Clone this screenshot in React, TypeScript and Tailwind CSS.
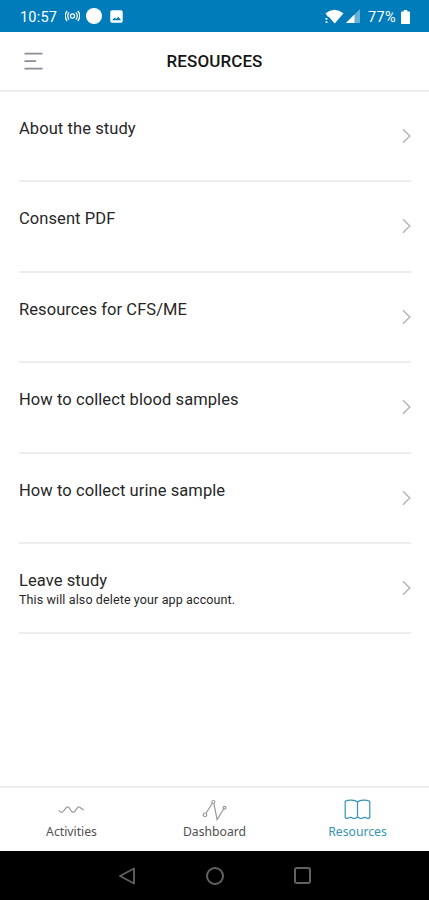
import React from 'react';

const resources = [
  { title: 'About the study' },
  { title: 'Consent PDF' },
  { title: 'Resources for CFS/ME' },
  { title: 'How to collect blood samples' },
  { title: 'How to collect urine sample' },
  { title: 'Leave study', note: 'This will also delete your app account.' },
];

const StatusBar: React.FC = () => (
  <div className="h-8 shrink-0 bg-[#007cba] text-white flex items-center justify-between pl-[20px] pr-[18px]">
    <div className="flex items-center">
      <span className="w-[37px] pt-[4px] text-[14.5px] leading-none tracking-[0.2px]">10:57</span>
      <svg className="ml-[8px]" width="15" height="12" viewBox="0 0 15 12" fill="none" stroke="currentColor" strokeWidth="1.2">
        <circle cx="7.5" cy="6" r="2.1" />
        <path d="M4.2 2.4a5 5 0 0 0 0 7.2M2.2 1a7.5 7.5 0 0 0 0 10M10.8 2.4a5 5 0 0 1 0 7.2M12.8 1a7.5 7.5 0 0 1 0 10" />
      </svg>
      <span className="ml-[6px] w-4 h-4 rounded-full bg-white" />
      <svg className="ml-[8px]" width="13" height="13" viewBox="0 0 13 13">
        <rect x="0.3" y="0.3" width="12.4" height="12.4" rx="1.6" fill="#fff" />
        <path d="M2.2 10.2l2.3-2.6 1.7 1.5 2.2-2.3 2.6 3.4z" fill="#007cba" />
      </svg>
    </div>
    <div className="flex items-center">
      <svg width="19" height="15" viewBox="0 0 19 15" fill="#fff">
        <path d="M0.5 4.3Q9.5-2.8 18.5 4.3L10.2 14Q9.7 14.5 9.2 14L4.5 8.5Q3.5 7.6 2.6 7.6z" />
        <path d="M0.6 9h1.8v1.8H.6zM.6 12.2h1.8V14H.6z" />
      </svg>
      <svg className="ml-[2px]" width="14" height="14" viewBox="0 0 14 14" fill="#fff">
        <path d="M14 0v14H0z" opacity="0.4" />
        <path d="M8.5 5.5V14H0z" />
      </svg>
      <span className="ml-[8px] w-[29px] pt-[4px] text-[14.5px] leading-none tracking-[0.4px]">77%</span>
      <svg className="ml-[4px] mr-px mt-px" width="9" height="14" viewBox="0 0 9 14" fill="#fff">
        <path d="M2.7 0h3.6v1.5h1.9q.8 0 .8.8v10.9q0 .8-.8.8H.8q-.8 0-.8-.8V2.3q0-.8.8-.8h1.9z" />
      </svg>
    </div>
  </div>
);

const Header: React.FC = () => (
  <header className="h-[60px] shrink-0 border-b-2 border-[#eceeee] grid grid-cols-[1fr_auto_1fr] items-center px-[24px]">
    <button className="w-5">
      <svg width="19" height="19" viewBox="0 0 19 19" stroke="#8c8d99" strokeWidth="1.8">
        <path d="M.5 1.7h18M.5 9.2h11.5M.5 16.7h18" />
      </svg>
    </button>
    <h1 className="pt-[2px] text-[17px] font-medium tracking-[0.1px] text-[#161616]">RESOURCES</h1>
  </header>
);

const tabs = [
  {
    name: 'Activities',
    active: false,
    icon: <path d="M.8 11.3q2.7 4.2 5.4 0l1.4-2q2-2.7 4 0l1.6 2.6q2 2.6 4 0l1.8-2.6q2-2.7 4 0l2.8 1.6" />,
  },
  {
    name: 'Dashboard',
    active: false,
    icon: (
      <>
        <circle cx="4" cy="15.8" r="1.8" />
        <circle cx="12.3" cy="3" r="1.5" />
        <path d="M5 14.2L11.3 4.3M12.9 4.6l3.2 16L22.6 10" />
        <circle cx="23.5" cy="8.8" r="1.4" />
      </>
    ),
  },
  {
    name: 'Resources',
    active: true,
    icon: <path d="M13.5 3C10.5.7 5 .5 1.2 2.2v16.3q1.4 1.6 3.2.4 2-1.2 4 0 1.7 1.2 3.4 0l1.7-1 1.7 1q1.7 1.2 3.4 0 2-1.2 4 0 1.8 1.2 3.2-.4V2.2C22 .5 16.5.7 13.5 3v15" />,
  },
];

export default function App() {
  return (
    <div className="w-[429px] h-[900px] bg-white flex flex-col overflow-hidden font-['Roboto',sans-serif]">
      <StatusBar />
      <Header />
      <main className="flex-1 pl-[19px] pr-[18px]">
        {resources.map((item) => (
          <div key={item.title} className="h-[90.4px] border-b-2 border-[#eceeee] flex justify-between">
            <div className="pt-[27px] text-[#272727]">
              <p className="text-[16.5px] leading-5 whitespace-nowrap tracking-[0.08px]">{item.title}</p>
              {item.note && <p className="text-[12.5px] leading-[18px] whitespace-nowrap tracking-[0.12px]">{item.note}</p>}
            </div>
            <svg className="mt-[36px]" width="10" height="16" viewBox="0 0 10 16" fill="none" stroke="#b5b5b5" strokeWidth="1.5">
              <path d="M2 1.2L8.8 8 2 14.8" />
            </svg>
          </div>
        ))}
      </main>
      <nav className="h-[65px] shrink-0 border-t-2 border-[#eeeeee] grid grid-cols-3">
        {tabs.map((tab) => (
          <div key={tab.name} className={tab.active ? 'flex flex-col items-center pt-[11px] text-[#3594b4]' : 'flex flex-col items-center pt-[11px] text-[#505050]'}>
            <svg className={tab.active ? '' : 'text-[#999]'} width="27" height="22" viewBox="0 0 27 22" fill="none" stroke="currentColor" strokeWidth="1.2">
              {tab.icon}
            </svg>
            <span className="mt-[2px] text-[12.2px] leading-[18px] font-['Noto_Sans',sans-serif]">{tab.name}</span>
          </div>
        ))}
      </nav>
      <div className="h-[49px] shrink-0 bg-black flex items-center justify-center gap-[70px] text-[#626262]">
        <svg width="18" height="18" viewBox="0 0 18 18" fill="none" stroke="currentColor" strokeWidth="1.8" strokeLinejoin="round">
          <path d="M16 1.5v15L2 9z" />
        </svg>
        <span className="w-[18px] h-[18px] rounded-full border-2 border-[#626262]" />
        <span className="w-[17px] h-[17px] rounded-[3px] border-2 border-[#626262]" />
      </div>
    </div>
  );
}
